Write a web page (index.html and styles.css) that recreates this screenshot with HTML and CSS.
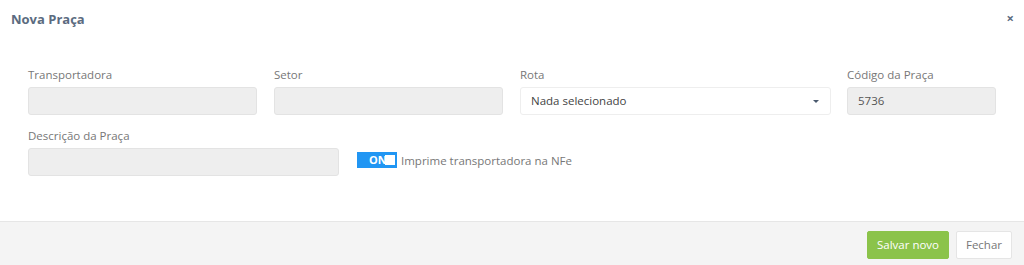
FILE: index.html
```html
<!DOCTYPE html>
<html lang="pt">
<head>
  <meta charset="UTF-8"/>
  <title>Nova Praça</title>
  <link rel="stylesheet" href="styles.css">
</head>
<body>
  <div class="modal">
    <div class="modal-header">
      <h4>Nova Praça</h4>
      <span class="close">&times;</span>
    </div>
    <div class="modal-body">
      <div class="row">
        <div class="field col-a">
          <label>Transportadora</label>
          <div class="input"></div>
        </div>
        <div class="field col-a">
          <label>Setor</label>
          <div class="input"></div>
        </div>
        <div class="field col-b">
          <label>Rota</label>
          <div class="input select">
            <span>Nada selecionado</span>
            <span class="caret"></span>
          </div>
        </div>
        <div class="field col-c">
          <label>Código da Praça</label>
          <div class="input">5736</div>
        </div>
      </div>
      <div class="row">
        <div class="field col-b">
          <label>Descrição da Praça</label>
          <div class="input"></div>
        </div>
        <div class="switch-wrap">
          <span class="switch">ON<i></i></span>
          <span class="switch-label">Imprime transportadora na NFe</span>
        </div>
      </div>
    </div>
    <div class="modal-footer">
      <button class="btn btn-save">Salvar novo</button>
      <button class="btn btn-close">Fechar</button>
    </div>
  </div>
</body>
</html>
```

FILE: styles.css
```css
* { box-sizing: border-box; margin: 0; padding: 0; }
html, body { height: 100%; }
body {
  font-family: 'Open Sans', 'Noto Sans', sans-serif;
  font-size: 11.5px; color: #777;
  background: #fff;
}

.modal { height: 265px; display: flex; flex-direction: column; }

/* Cabecalho */
.modal-header {
  display: flex; justify-content: space-between; align-items: center;
  height: 37px; padding: 0 10px 0 11px;
}
.modal-header h4 {
  font-size: 13px; font-weight: 700; color: #5b6b80;
}
.close { font-size: 13px; font-weight: 700; color: #5b6b80; line-height: 1; }

/* Corpo */
.modal-body { flex: 1; padding: 31px 0 0 28px; }
.row { display: flex; align-items: flex-start; margin-bottom: 14px; }
.field { margin-right: 17px; }
.col-a { width: 229px; }
.col-b { width: 311px; }
.col-c { width: 149px; margin-right: 0; }
.row .col-b + .col-c { margin-left: -1px; }

.field label {
  display: block; height: 14px; line-height: 14px;
  margin-bottom: 5px; font-size: 11.5px; color: #777;
}
.input {
  height: 28px; padding: 0 10px;
  background: #eee; border: 1px solid #e3e3e3; border-radius: 3px;
  line-height: 26px; font-size: 11.5px; color: #555;
}
.select {
  display: flex; justify-content: space-between; align-items: center;
  background: #fff; border-color: #eee; color: #444;
}
.caret {
  width: 0; height: 0; margin-right: 1px;
  border-left: 3px solid transparent; border-right: 3px solid transparent;
  border-top: 3px solid #4a5a6e;
}

.switch-wrap {
  display: flex; align-items: center; gap: 4px;
  margin-top: 23px; margin-left: 1px;
}
.switch {
  position: relative; width: 40px; height: 16px;
  background: #2196f3; color: #fff;
  font-size: 11px; font-weight: 700; line-height: 16px;
  padding-left: 12px;
}
.switch i {
  position: absolute; right: 2px; top: 3px;
  width: 10px; height: 10px; background: #fff;
}
.switch-label { font-size: 11.5px; color: #777; }

/* Rodape */
.modal-footer {
  height: 44px; display: flex; justify-content: flex-end; align-items: center;
  gap: 7px; padding: 2px 12px 0 0;
  background: #f4f4f4; border-top: 1px solid #e6e6e6;
}
.btn {
  height: 28px; padding: 0; border-radius: 2px; white-space: nowrap;
  font-family: inherit; font-size: 11.5px; cursor: pointer;
}
.btn-save { width: 82px; background: #8bc34a; color: #fff; border: 1px solid #8bc34a; }
.btn-close { width: 56px; background: #fff; color: #777; border: 1px solid #e5e5e5; }
```
